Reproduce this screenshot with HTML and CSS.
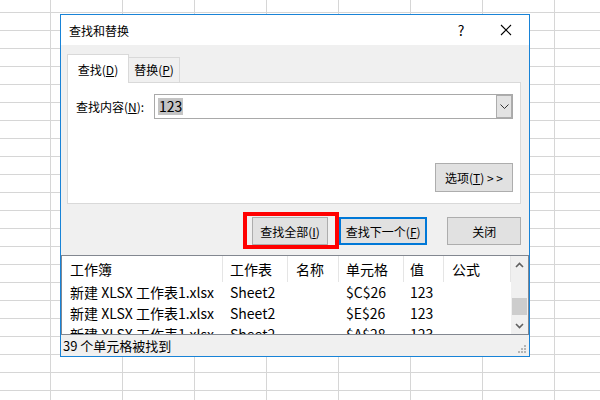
FILE: index.html
```html
<!DOCTYPE html>
<html lang="zh-CN">

<head>
    <meta charset="UTF-8">
    <meta name="viewport" content="width=device-width, initial-scale=1.0">
    <title>查找和替换</title>
    <link rel="stylesheet" href="styles.css">
</head>

<body>

    <div class="dialog">
        <div class="titlebar">
            <span class="title">查找和替换</span>
            <span class="help">?</span>
            <svg class="close" width="12" height="12" viewBox="0 0 12 12">
                <path d="M1 1 L11 11 M11 1 L1 11" stroke="#000" stroke-width="1.1" fill="none" />
            </svg>
        </div>

        <div class="main">
            <div class="tabs">
                <div class="tab active">查找(<u>D</u>)</div>
                <div class="tab">替换(<u>P</u>)</div>
            </div>

            <div class="panel">
                <div class="find-row">
                    <label class="find-label">查找内容(<u>N</u>):</label>
                    <div class="combo">
                        <div class="combo-text"><span class="selected">123</span></div>
                        <div class="combo-drop">
                            <svg width="9" height="6" viewBox="0 0 9 6">
                                <path d="M0.5 0.5 L4.5 4.5 L8.5 0.5" stroke="#333" stroke-width="1" fill="none" />
                            </svg>
                        </div>
                    </div>
                </div>
                <button class="btn options">选项(<u>T</u>) &gt; &gt;</button>
            </div>

            <div class="actions">
                <div class="highlight">
                    <button class="btn find-all">查找全部(<u>I</u>)</button>
                </div>
                <button class="btn find-next">查找下一个(<u>F</u>)</button>
                <button class="btn close-btn">关闭</button>
            </div>
        </div>

        <div class="results">
            <div class="table">
                <div class="row head">
                    <div class="cell">工作簿</div>
                    <div class="cell">工作表</div>
                    <div class="cell">名称</div>
                    <div class="cell">单元格</div>
                    <div class="cell">值</div>
                    <div class="cell">公式</div>
                </div>
                <div class="row">
                    <div class="cell">新建 XLSX 工作表1.xlsx</div>
                    <div class="cell">Sheet2</div>
                    <div class="cell"></div>
                    <div class="cell">$C$26</div>
                    <div class="cell">123</div>
                    <div class="cell"></div>
                </div>
                <div class="row">
                    <div class="cell">新建 XLSX 工作表1.xlsx</div>
                    <div class="cell">Sheet2</div>
                    <div class="cell"></div>
                    <div class="cell">$E$26</div>
                    <div class="cell">123</div>
                    <div class="cell"></div>
                </div>
                <div class="row">
                    <div class="cell">新建 XLSX 工作表1.xlsx</div>
                    <div class="cell">Sheet2</div>
                    <div class="cell"></div>
                    <div class="cell">$A$28</div>
                    <div class="cell">123</div>
                    <div class="cell"></div>
                </div>
            </div>
            <div class="scrollbar">
                <div class="arrow">
                    <svg width="9" height="6" viewBox="0 0 9 6">
                        <path d="M1 5 L4.5 1.5 L8 5" stroke="#606060" stroke-width="1.6" fill="none" />
                    </svg>
                </div>
                <div class="track">
                    <div class="thumb"></div>
                </div>
                <div class="arrow">
                    <svg width="9" height="6" viewBox="0 0 9 6">
                        <path d="M1 1 L4.5 4.5 L8 1" stroke="#606060" stroke-width="1.6" fill="none" />
                    </svg>
                </div>
            </div>
        </div>

        <div class="status">
            <span>39 个单元格被找到</span>
            <!-- grip de redimension -->
            <svg class="grip" width="9" height="9" viewBox="0 0 9 9">
                <rect x="6" y="0" width="2" height="2" fill="#b5b5b5" />
                <rect x="3" y="3" width="2" height="2" fill="#b5b5b5" />
                <rect x="6" y="3" width="2" height="2" fill="#b5b5b5" />
                <rect x="0" y="6" width="2" height="2" fill="#b5b5b5" />
                <rect x="3" y="6" width="2" height="2" fill="#b5b5b5" />
                <rect x="6" y="6" width="2" height="2" fill="#b5b5b5" />
            </svg>
        </div>
    </div>

</body>

</html>
```

FILE: styles.css
```css
body {
    margin: 0;
    padding: 14px 0 0 60px;
    height: 400px;
    box-sizing: border-box;
    font-family: "Noto Sans CJK SC", "Noto Sans", sans-serif;
    font-size: 12px;
    color: #000;
    background-color: #fff;
    /* grille de la feuille */
    background-image:
        linear-gradient(to right, #d6d6d6 1px, transparent 1px),
        linear-gradient(to bottom, #d6d6d6 1px, transparent 1px);
    background-size: 72px 18px;
    background-position: 50px 12px;
}

u {
    text-decoration: underline;
    text-underline-offset: 1px;
}

.dialog {
    width: 468px;
    height: 341px;
    border: 1px solid #1883d7;
    background-color: #f0f0f0;
    display: flex;
    flex-direction: column;
}

.titlebar {
    height: 30px;
    background-color: #fff;
    display: flex;
    align-items: center;
    padding-left: 8px;
    flex-shrink: 0;
}

.title {
    flex: 1;
    font-size: 12px;
}

.help {
    font-size: 14px;
    width: 12px;
    text-align: center;
    margin-right: 33px;
}

.close {
    margin-right: 17px;
}

.main {
    padding: 9px 8px 0 6px;
}

.tabs {
    display: flex;
    align-items: flex-end;
    height: 28px;
}

.tab {
    height: 25px;
    box-sizing: border-box;
    border: 1px solid #d9d9d9;
    border-bottom: none;
    line-height: 24px;
    text-align: center;
    width: 52px;
}

.tab.active {
    width: 62px;
    height: 29px;
    margin-bottom: -1px;
    margin-right: -1px;
    background-color: #fff;
    position: relative;
    z-index: 1;
    line-height: 30px;
}

.panel {
    height: 122px;
    box-sizing: border-box;
    border: 1px solid #d9d9d9;
    background-color: #fff;
    padding: 11px 7px 11px 8px;
    display: flex;
    flex-direction: column;
}

.find-row {
    display: flex;
    align-items: center;
}

.find-label {
    width: 78px;
}

.combo {
    flex: 1;
    height: 25px;
    box-sizing: border-box;
    border: 1px solid #a9a9a9;
    display: flex;
}

.combo-text {
    flex: 1;
    padding-left: 3px;
    display: flex;
    align-items: center;
}

.selected {
    background-color: #c4c4c4;
    font-size: 14px;
    line-height: 17px;
    padding: 0 1px;
}

.combo-drop {
    width: 14px;
    background-color: #e3e3e3;
    border: 1px solid #adadad;
    display: flex;
    align-items: center;
    justify-content: center;
}

.btn {
    font-family: "Noto Sans CJK SC", "Noto Sans", sans-serif;
    font-size: 12px;
    color: #000;
    background-color: #e1e1e1;
    border: 1px solid #adadad;
    height: 28px;
    padding: 0;
    box-sizing: border-box;
}

.options {
    width: 78px;
    height: 29px;
    margin-top: auto;
    align-self: flex-end;
}

.actions {
    display: flex;
    align-items: flex-start;
    margin-top: 8px;
    padding-left: 176px;
}

.highlight {
    border: 4px solid #ff0000;
    padding: 1px 7px 0 5px;
}

.find-all {
    width: 76px;
}

.find-next {
    width: 89px;
    margin-top: 5px;
    border: 2px solid #0078d7;
}

.close-btn {
    width: 74px;
    margin-top: 5px;
    margin-left: 20px;
}

.results {
    margin-top: 6px;
    height: 80px;
    box-sizing: border-box;
    border: 1px solid #828790;
    background-color: #fff;
    display: flex;
    overflow: hidden;
}

.table {
    flex: 1;
    overflow: hidden;
    font-size: 14px;
}

.row {
    display: grid;
    grid-template-columns: 161px 65px 51px 65px 40px 1fr;
    height: 21px;
    line-height: 21px;
}

.row.head {
    height: 26px;
    line-height: 26px;
}

.cell {
    padding-left: 8px;
    white-space: nowrap;
    overflow: hidden;
}

.row .cell:nth-child(2),
.row .cell:nth-child(4) {
    padding-left: 7px;
}

.row .cell:nth-child(5) {
    padding-left: 6px;
}

.head .cell {
    border-right: 1px solid #e5e5e5;
}

.scrollbar {
    width: 17px;
    background-color: #f0f0f0;
    display: flex;
    flex-direction: column;
}

.arrow {
    height: 17px;
    display: flex;
    align-items: center;
    justify-content: center;
}

.track {
    flex: 1;
    display: flex;
    flex-direction: column;
    justify-content: flex-end;
    padding: 0 1px 2px;
}

.thumb {
    height: 17px;
    background-color: #cdcdcd;
}

.status {
    flex: 1;
    display: flex;
    align-items: center;
    padding-left: 2px;
    font-size: 13px;
    position: relative;
}

.grip {
    position: absolute;
    right: 2px;
    bottom: 2px;
}
```
